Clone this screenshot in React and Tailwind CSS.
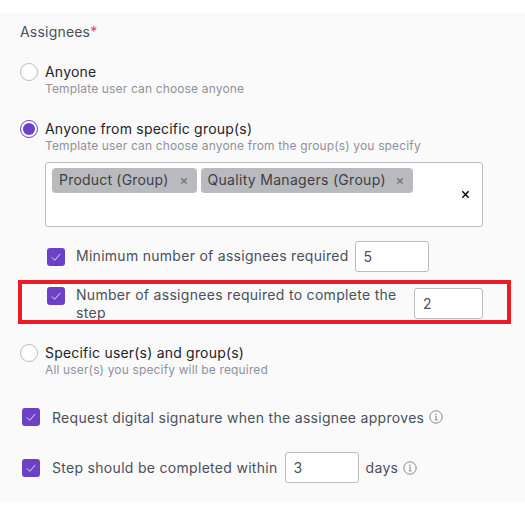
const InfoIcon = () => (
  <svg viewBox="0 0 14 14" fill="none" stroke="#8a8a8a" className="w-[14px] h-[14px] shrink-0">
    <circle cx="7" cy="7" r="6.2" strokeWidth="1" />
    <path d="M6 6.2h1.2v3.6M5.8 9.9h2.8" strokeWidth="1" />
    <circle cx="6.9" cy="4.2" r="0.8" fill="#8a8a8a" stroke="none" />
  </svg>
);

const Close = ({ className }) => (
  <svg viewBox="0 0 10 10" fill="none" stroke="currentColor" strokeWidth="1.6" className={className}>
    <path d="M1.5 1.5l7 7M8.5 1.5l-7 7" />
  </svg>
);

function Radio({ checked, label, hint }) {
  return (
    <div className="flex items-start gap-[7px]">
      {checked ? (
        <span className="w-[18px] h-[18px] rounded-full border border-[#6d41c6] bg-white flex items-center justify-center shrink-0">
          <span className="w-[12px] h-[12px] rounded-full bg-[#6d41c6]" />
        </span>
      ) : (
        <span className="w-[18px] h-[18px] rounded-full border border-[#bdbdbd] bg-white shrink-0" />
      )}
      <div>
        <div className="text-[14px] leading-[18px] tracking-[0.2px] text-[#24242c]">{label}</div>
        <div className="text-[12px] leading-[16px] tracking-[0.15px] text-[#8f929c]">{hint}</div>
      </div>
    </div>
  );
}

function Check() {
  return (
    <span className="w-[18px] h-[18px] rounded-[3px] bg-[#6d41c6] flex items-center justify-center shrink-0">
      <svg viewBox="0 0 12 12" fill="none" stroke="#e6def7" strokeWidth="1" className="w-[12px] h-[12px]">
        <path d="M1.8 6.4l2.9 2.9 5.6-6.4" />
      </svg>
    </span>
  );
}

function NumberBox({ value, className }) {
  return (
    <div className={`h-[31px] rounded-[3px] border border-[#bdbdbd] bg-white pl-[8px] flex items-center text-[14px] tracking-[0.2px] text-[#4b4f5c] shrink-0 ${className}`}>
      {value}
    </div>
  );
}

function Chip({ label, className }) {
  return (
    <span className={`h-[25px] rounded-[4px] bg-[#b9babd] pl-[7px] pr-[9px] pb-[2px] flex items-center text-[14px] text-[#3d3f47] ${className}`}>
      {label}
      <Close className="w-[8px] h-[8px] mt-[2px] text-[#74757a]" />
    </span>
  );
}

export default function App() {
  return (
    <div className="w-[525px] h-[525px] bg-white pt-[13px] overflow-hidden font-['Inter',sans-serif]">
      <div className="h-[490px] bg-[#fafafa] pl-[20px] pt-[10px] rounded-bl-[4px]">
        <div className="text-[14px] leading-[18px] tracking-[0.2px] text-[#4b4f5c]">
          Assignees<span className="text-[#f0357a]">*</span>
        </div>

        <div className="mt-[22px]">
          <Radio label="Anyone" hint="Template user can choose anyone" />
        </div>
        <div className="mt-[23px]">
          <Radio checked label="Anyone from specific group(s)" hint="Template user can choose anyone from the group(s) you specify" />
        </div>

        <div className="ml-[25px] mt-[8px] w-[438px] h-[65px] rounded-[3px] border border-[#bdbdbd] bg-white pl-[6px] pt-[5px] pr-[12px] flex items-center">
          <div className="flex-1 self-start flex gap-[4px]">
            <Chip label="Product (Group)" className="gap-[11px] tracking-[0.2px]" />
            <Chip label="Quality Managers (Group)" className="gap-[10px] tracking-[0.3px]" />
          </div>
          <Close className="w-[9px] h-[9px] text-black mb-[5px]" />
        </div>

        <div className="ml-[27px] mt-[14px] flex items-center">
          <Check />
          <span className="ml-[11px] -mt-[2px] text-[14px] tracking-[0.28px] text-[#4b4f5c]">Minimum number of assignees required</span>
          <NumberBox value="5" className="ml-[6px] w-[74px]" />
        </div>

        <div className="relative ml-[27px] mt-[15px] w-[436px] flex items-start">
          {/* rectangle drawn on the screenshot */}
          <div className="absolute -left-[29px] -top-[7px] w-[493px] h-[44px] border-[4px] border-[#ed1c24]" />
          <Check />
          <span className="ml-[11px] -mt-[1px] w-[335px] text-[14px] leading-[18px] tracking-[0.3px] text-[#4b4f5c]">
            Number of assignees required to complete the step
          </span>
          <NumberBox value="2" className="ml-auto mt-[1px] w-[69px]" />
        </div>

        <div className="mt-[22px]">
          <Radio label="Specific user(s) and group(s)" hint="All user(s) you specify will be required" />
        </div>

        <div className="ml-[2px] mt-[30px] flex items-center h-[18px]">
          <Check />
          <span className="ml-[12px] text-[14px] tracking-[0.3px] text-[#4b4f5c]">Request digital signature when the assignee approves</span>
          <span className="ml-[5px]"><InfoIcon /></span>
        </div>

        <div className="ml-[2px] mt-[26px] flex items-center h-[31px]">
          <Check />
          <span className="ml-[12px] text-[14px] tracking-[0.3px] text-[#4b4f5c]">Step should be completed within</span>
          <NumberBox value="3" className="ml-[7px] w-[74px]" />
          <span className="ml-[7px] text-[14px] tracking-[0.3px] text-[#4b4f5c]">days</span>
          <span className="ml-[5px]"><InfoIcon /></span>
        </div>
      </div>
    </div>
  );
}
